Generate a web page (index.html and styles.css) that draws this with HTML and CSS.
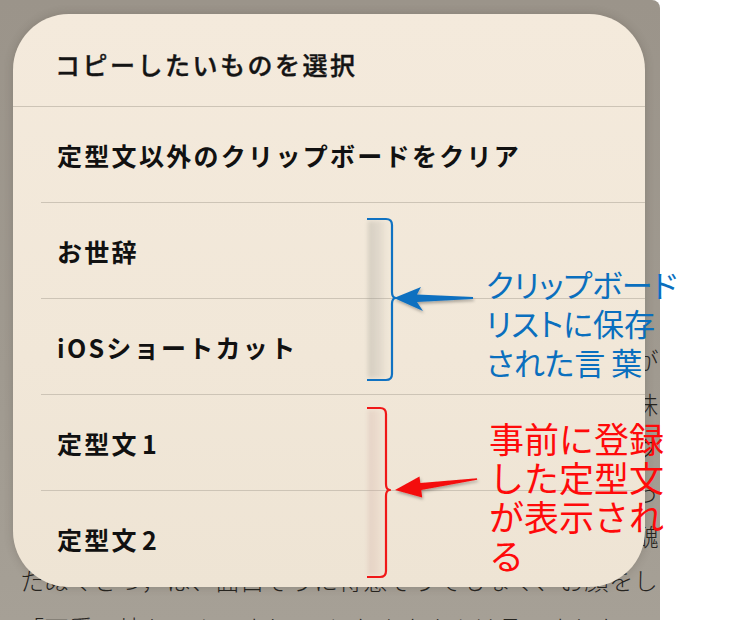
FILE: index.html
```html
<!DOCTYPE html>
<html lang="ja">
<head>
<meta charset="utf-8">
<title>コピーしたいものを選択</title>
<link rel="stylesheet" href="styles.css">
</head>
<body>
<div class="canvas">
  <div class="page">
    <div class="book">
      <div class="line line-end">が</div>
      <div class="line line-end">味</div>
      <div class="line line-end">ク</div>
      <div class="line line-end">っ</div>
      <div class="line line-end">醜</div>
      <div class="line">たぬくさつ，は、面白そうに得意そうでもなく、お顔をし</div>
      <div class="line">「可愛い坊ちゃんですね。」とたぬきさんは言いました。</div>
    </div>

    <div class="sheet">
      <div class="sheet-title">コピーしたいものを選択</div>
      <ul class="menu">
        <li class="menu-item">定型文以外のクリップボードをクリア</li>
        <li class="menu-item">お世辞</li>
        <li class="menu-item">iOSショートカット</li>
        <li class="menu-item">定型文<span class="num">1</span></li>
        <li class="menu-item">定型文<span class="num">2</span></li>
      </ul>
    </div>
  </div>

  <svg class="marks" width="731" height="620" viewBox="0 0 731 620" xmlns="http://www.w3.org/2000/svg">
    <defs>
      <linearGradient id="shadeBlue" x1="0" y1="0" x2="1" y2="0">
        <stop offset="0" stop-color="#8f8f88" stop-opacity="0.30"/>
        <stop offset="0.6" stop-color="#9a9a92" stop-opacity="0.18"/>
        <stop offset="1" stop-color="#9a9a92" stop-opacity="0"/>
      </linearGradient>
      <linearGradient id="shadeRed" x1="0" y1="0" x2="1" y2="0">
        <stop offset="0" stop-color="#c9a49a" stop-opacity="0.30"/>
        <stop offset="0.6" stop-color="#d8aca0" stop-opacity="0.18"/>
        <stop offset="1" stop-color="#d8aca0" stop-opacity="0"/>
      </linearGradient>
      <filter id="soft" x="-20%" y="-20%" width="140%" height="140%">
        <feGaussianBlur stdDeviation="2"/>
      </filter>
      <filter id="drop" x="-20%" y="-50%" width="140%" height="200%">
        <feDropShadow dx="1" dy="2" stdDeviation="1.5" flood-color="#000" flood-opacity="0.3"/>
      </filter>
    </defs>

    <!-- blue bracket -->
    <rect x="368" y="221" width="20" height="157" fill="url(#shadeBlue)" filter="url(#soft)"/>
    <path d="M367 219 H386 Q392 219 392 225 V292 Q392 298 396 298 Q392 298 392 304 V374 Q392 380 386 380 H367"
          fill="none" stroke="#1072c2" stroke-width="2.2" stroke-linejoin="round"/>
    <polygon points="394,298 421,287 417,294.5 473,297 473,299 417,302 423,311" fill="#1070c0" filter="url(#drop)"/>

    <!-- red bracket -->
    <rect x="368" y="410" width="16" height="165" fill="url(#shadeRed)" filter="url(#soft)"/>
    <path d="M367 408 H380 Q386 408 386 414 V484 Q386 490 390 490 Q386 490 386 496 V571 Q386 577 380 577 H367"
          fill="none" stroke="#f01818" stroke-width="2.2" stroke-linejoin="round"/>
    <polygon points="395,490 419.5,476.5 420.3,483 477,478.2 477.2,479.8 421.3,490 422.2,497.5" fill="#f41010" filter="url(#drop)"/>
  </svg>

  <div class="note note-blue">クリップボード<br>リストに保存<br>された言<span class="gap"></span>葉</div>
  <div class="note note-red">事前に登録した定型文が表示される</div>
</div>
</body>
</html>
```

FILE: styles.css
```css
* { box-sizing: border-box; }

html, body {
  margin: 0;
  padding: 0;
  background: #ffffff;
}

body {
  font-family: "Noto Sans CJK JP", "Noto Sans", sans-serif;
}

.canvas {
  position: relative;
  width: 731px;
  height: 620px;
  overflow: hidden;
  background: #ffffff;
}

.page {
  position: relative;
  width: 660px;
  height: 620px;
  border-top-right-radius: 8px;
  background: linear-gradient(180deg, #9b948a 0%, #a09a90 60%, #a6a096 100%);
  overflow: hidden;
}

/* book text behind the sheet */
.book {
  padding: 338px 0 0 20px;
  font-size: 24px;
  line-height: 44px;
  letter-spacing: 0.6px;
  font-weight: 300;
  color: #26241f;
  white-space: nowrap;
}

.line {
  height: 44px;
}

.line-end {
  text-align: right;
  padding-right: 1px;
}

.line:last-child {
  margin-top: 4px;
}

/* action sheet */
.sheet {
  position: absolute;
  left: 13px;
  top: 14px;
  width: 632px;
  height: 573px;
  border-radius: 56px;
  background: linear-gradient(180deg, #f4eadc 0%, #f1e7d8 60%, #eee4d4 100%);
  box-shadow: 0 0 10px rgba(60, 50, 40, 0.22);
  overflow: hidden;
}

.sheet-title {
  height: 93px;
  padding: 8px 0 0 42px;
  display: flex;
  align-items: center;
  font-size: 25px;
  font-weight: 500;
  letter-spacing: 2.5px;
  color: #141414;
  -webkit-text-stroke: 0.4px #141414;
  border-bottom: 1px solid #cdc4b6;
}

.menu {
  list-style: none;
  margin: 0 0 0 28px;
  padding: 0;
}

.menu-item {
  height: 96px;
  padding-left: 16px;
  display: flex;
  align-items: center;
  font-size: 25px;
  font-weight: 700;
  letter-spacing: 2.3px;
  color: #111111;
  border-bottom: 1px solid #cdc4b6;
}

.menu-item:last-child {
  border-bottom: none;
}

.num {
  margin-left: 3px;
}

/* annotations */
.marks {
  position: absolute;
  left: 0;
  top: 0;
  pointer-events: none;
}

.note {
  position: absolute;
  font-family: "Noto Sans CJK JP", sans-serif;
  font-weight: 400;
}

.note-blue {
  left: 486px;
  top: 264px;
  font-size: 31px;
  line-height: 39px;
  color: #0a6fbe;
  font-feature-settings: "palt" 1;
  white-space: nowrap;
}

.gap {
  display: inline-block;
  width: 6px;
}

.note-red {
  left: 489px;
  top: 418px;
  width: 184px;
  font-size: 35px;
  line-height: 39px;
  color: #ff0a0a;
}
```
